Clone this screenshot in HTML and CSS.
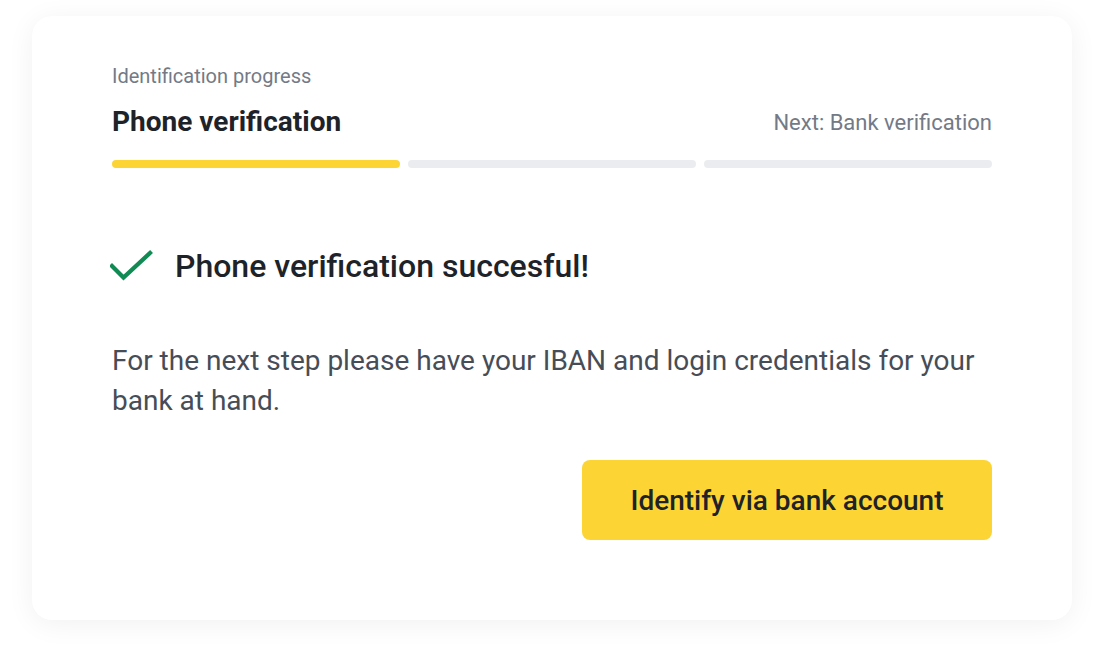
FILE: index.html
```html
<!DOCTYPE html>
<html lang="en">
<head>
<meta charset="utf-8">
<title>Identification progress</title>
<link rel="stylesheet" href="styles.css">
</head>
<body>
<div class="card">
  <div class="label">Identification progress</div>
  <div class="step-row">
    <div class="step-title">Phone verification</div>
    <div class="step-next">Next: Bank verification</div>
  </div>
  <div class="bars">
    <div class="bar bar-done"></div>
    <div class="bar"></div>
    <div class="bar"></div>
  </div>
  <div class="success">
    <svg class="check" width="44" height="32" viewBox="0 0 44 32" aria-hidden="true">
      <path d="M2 16 L13.5 27.5 L40 3" fill="none" stroke="#118a53" stroke-width="4.2" stroke-linecap="square" stroke-linejoin="miter"/>
    </svg>
    <div class="success-text">Phone verification succesful!</div>
  </div>
  <p class="info">For the next step please have your IBAN and login credentials for your bank at hand.</p>
  <div class="actions">
    <button class="btn">Identify via bank account</button>
  </div>
</div>
</body>
</html>
```

FILE: styles.css
```css
html, body {
  margin: 0;
  padding: 0;
  background: #ffffff;
}
body {
  font-family: Roboto, "Liberation Sans", Arial, sans-serif;
  padding: 16px 32px 48px 32px;
}
.card {
  width: 1040px;
  height: 604px;
  box-sizing: border-box;
  background: #ffffff;
  border-radius: 20px;
  box-shadow: 0 4px 28px rgba(0, 0, 0, 0.06);
  padding: 48px 80px 80px 80px;
  display: flex;
  flex-direction: column;
}
.label {
  font-size: 20px;
  line-height: 24px;
  color: #737a86;
}
.step-row {
  margin-top: 17px;
  display: flex;
  justify-content: space-between;
  align-items: center;
  height: 32px;
}
.step-title {
  font-size: 28px;
  font-weight: 700;
  color: #1e2329;
}
.step-next {
  font-size: 22px;
  color: #737a86;
  padding-top: 3px;
}
.bars {
  margin-top: 23px;
  display: flex;
  gap: 8px;
}
.bar {
  flex: 1;
  height: 8px;
  border-radius: 4px;
  background: #eaecef;
}
.bar-done {
  background: #fcd535;
}
.success {
  margin-top: 78px;
  display: flex;
  align-items: center;
  height: 40px;
}
.check {
  margin-left: -2px;
  margin-right: 21px;
  flex: none;
}
.success-text {
  font-size: 32px;
  font-weight: 500;
  color: #1e2329;
}
.info {
  margin: 55px 0 0 0;
  font-size: 28px;
  line-height: 40px;
  color: #474d57;
}
.actions {
  margin-top: 39px;
  display: flex;
  justify-content: flex-end;
}
.btn {
  width: 410px;
  height: 80px;
  border: none;
  border-radius: 8px;
  background: #fcd535;
  font-family: Roboto, "Liberation Sans", Arial, sans-serif;
  font-size: 28px;
  font-weight: 500;
  color: #1e2329;
  cursor: pointer;
}
```
